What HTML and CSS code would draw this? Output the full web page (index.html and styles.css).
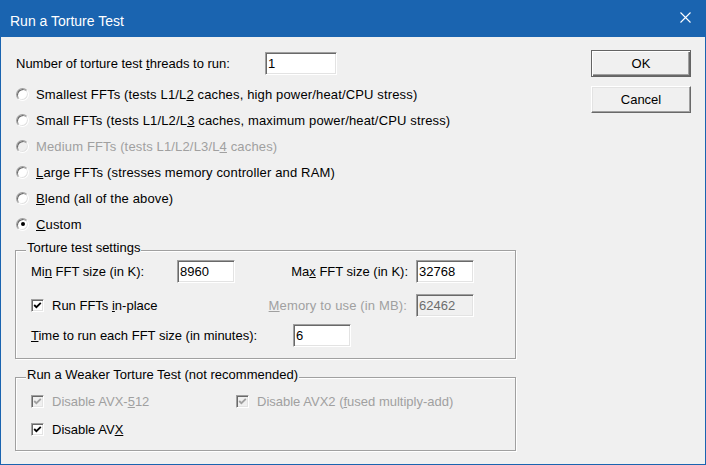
FILE: index.html
```html
<!DOCTYPE html>
<html lang="en">
<head>
    <meta charset="UTF-8">
    <title>Run a Torture Test</title>
    <link rel="stylesheet" href="styles.css">
</head>
<body>
    <div class="window">
        <div class="titlebar">
            <span class="title">Run a Torture Test</span>
            <span class="close">
                <svg width="11" height="11" viewBox="0 0 11 11"><path d="M0.5 0.5 L10.5 10.5 M10.5 0.5 L0.5 10.5" stroke="#fff" stroke-width="1.1" fill="none"/></svg>
            </span>
        </div>
        <div class="client">
            <div class="main">
                <div class="threads">
                    <label class="threads-label">Number of torture test <u>t</u>hreads to run:</label>
                    <input class="edit edit-threads" type="text" value="1">
                </div>

                <div class="choices">
                    <div class="opt"><span class="radio"></span><span>Smallest FFTs (tests L1/L<u>2</u> caches, high power/heat/CPU stress)</span></div>
                    <div class="opt"><span class="radio"></span><span>Small FFTs (tests L1/L2/L<u>3</u> caches, maximum power/heat/CPU stress)</span></div>
                    <div class="opt disabled"><span class="radio"></span><span>Medium FFTs (tests L1/L2/L3/L<u>4</u> caches)</span></div>
                    <div class="opt"><span class="radio"></span><span><u>L</u>arge FFTs (stresses memory controller and RAM)</span></div>
                    <div class="opt"><span class="radio"></span><span><u>B</u>lend (all of the above)</span></div>
                    <div class="opt"><span class="radio on"></span><span><u>C</u>ustom</span></div>
                </div>

                <fieldset class="group settings">
                    <legend>Torture test settings</legend>
                    <div class="frow">
                        <span class="cell-min">Mi<u>n</u> FFT size (in K):</span>
                        <input class="edit edit-size" type="text" value="8960">
                        <span class="cell-max">Ma<u>x</u> FFT size (in K):</span>
                        <input class="edit edit-size" type="text" value="32768">
                    </div>
                    <div class="frow r2">
                        <span class="cb cell-check"><span class="check"><svg viewBox="0 0 9 9"><path d="M1.2 4 L3.4 6.2 L7.8 1.8" /></svg></span><span>Run FFTs <u>i</u>n-place</span></span>
                        <span class="cell-mem dim"><u>M</u>emory to use (in MB):</span>
                        <input class="edit edit-mem" type="text" value="62462" disabled>
                    </div>
                    <div class="frow r3">
                        <span class="cell-time"><u>T</u>ime to run each FFT size (in minutes):</span>
                        <input class="edit edit-size" type="text" value="6">
                    </div>
                </fieldset>

                <fieldset class="group weaker">
                    <legend>Run a Weaker Torture Test (not recommended)</legend>
                    <div class="wrow w1">
                        <span class="cb cell-512 dim"><span class="check off"><svg viewBox="0 0 9 9"><path d="M1.2 4 L3.4 6.2 L7.8 1.8" /></svg></span><span>Disable AVX-<u>5</u>12</span></span>
                        <span class="cb dim"><span class="check off"><svg viewBox="0 0 9 9"><path d="M1.2 4 L3.4 6.2 L7.8 1.8" /></svg></span><span>Disable AVX2 (<u>f</u>used multiply-add)</span></span>
                    </div>
                    <div class="wrow r4">
                        <span class="cb"><span class="check"><svg viewBox="0 0 9 9"><path d="M1.2 4 L3.4 6.2 L7.8 1.8" /></svg></span><span>Disable AV<u>X</u></span></span>
                    </div>
                </fieldset>
            </div>

            <div class="side">
                <button class="btn default">OK</button>
                <button class="btn">Cancel</button>
            </div>
        </div>
    </div>
</body>
</html>
```

FILE: styles.css
```css
body {
    margin: 0;
    font-family: "Liberation Sans", Arial, sans-serif;
    font-size: 13px;
    color: #000;
}

.window {
    width: 706px;
    height: 465px;
    box-sizing: border-box;
    border: 1px solid #1a64b0;
    border-top: none;
    background: #f0f0f0;
    display: flex;
    flex-direction: column;
}

.titlebar {
    height: 37px;
    box-sizing: border-box;
    margin: 0 -1px;
    padding: 4px 0 0 10px;
    background: #1a64b0;
    color: #fff;
    font-size: 14px;
    display: flex;
    align-items: center;
    justify-content: space-between;
}

.close {
    display: flex;
    margin-right: 15px;
    margin-top: -6px;
}

.client {
    flex: 1;
    display: flex;
}

.main {
    padding: 15px 0 0 15px;
    display: flex;
    flex-direction: column;
}

.side {
    margin-left: auto;
    padding: 13px 14px 0 0;
    display: flex;
    flex-direction: column;
    gap: 9px;
}

/* push buttons */
.btn {
    width: 100px;
    height: 27px;
    padding: 0;
    font: inherit;
    color: #000;
    background: #f0f0f0;
    border: 1px solid;
    border-color: #fff #696969 #696969 #fff;
    box-shadow: inset -1px -1px 0 #a0a0a0, inset 1px 1px 0 #e3e3e3;
}

.btn.default {
    border-color: #646464;
    box-shadow: inset 1px 1px 0 #fff, inset -1px -1px 0 #696969, inset -2px -2px 0 #a0a0a0;
}

/* edit boxes */
.edit {
    box-sizing: border-box;
    height: 23px;
    margin: 0;
    padding: 0 0 0 2px;
    font: inherit;
    color: #000;
    background: #fff;
    border: 1px solid;
    border-color: #a0a0a0 #fff #fff #a0a0a0;
    box-shadow: inset 1px 1px 0 #696969, inset -1px -1px 0 #e3e3e3;
    outline: none;
}

.edit:disabled {
    background: #f0f0f0;
    color: #6d6d6d;
}

.edit-threads { width: 72px; }
.edit-size { width: 58px; }
.edit-mem { width: 58px; }

.threads {
    display: flex;
    align-items: center;
    height: 23px;
}

.threads-label {
    width: 249px;
}

/* radio list */
.choices {
    margin-top: 6px;
    display: flex;
    flex-direction: column;
}

.opt {
    height: 26px;
    display: flex;
    align-items: center;
    letter-spacing: 0.15px;
}

.opt.disabled {
    color: #a0a0a0;
}

.radio {
    width: 13px;
    height: 13px;
    box-sizing: border-box;
    margin-right: 7px;
    flex: none;
    border-radius: 50%;
    border: 1px solid;
    border-color: #a0a0a0 #fff #fff #a0a0a0;
    box-shadow: inset 1px 1px 0 #696969, inset -1px -1px 0 #e3e3e3;
    background: #fff;
    display: flex;
    align-items: center;
    justify-content: center;
}

.opt.disabled .radio {
    background: #f0f0f0;
}

.radio.on::after {
    content: "";
    width: 4px;
    height: 4px;
    border-radius: 50%;
    background: #000;
}

/* group boxes */
.group {
    margin: 4px 0 0 -1px;
    width: 501px;
    min-inline-size: 0;
    box-sizing: border-box;
    padding: 0 0 11px 15px;
    border: 1px solid #a0a0a0;
    box-shadow: inset 1px 1px 0 #fff, 1px 1px 0 #fff;
}

.group legend {
    line-height: 14px;
    padding: 0 1px 5px;
    margin-left: -5px;
    background: #f0f0f0;
}

.weaker {
    margin-top: 9px;
    padding-bottom: 9px;
}

.frow, .wrow {
    display: flex;
    align-items: center;
    height: 23px;
}

.cb {
    display: flex;
    align-items: center;
}

.r2 { margin-top: 11px; }
.r3 { margin-top: 7px; }
.w1 { margin-top: 3px; }
.r4 { margin-top: 5px; }

.cell-min { width: 146px; }

.cell-max {
    width: 181px;
    box-sizing: border-box;
    padding-right: 8px;
    text-align: right;
}

.cell-check { width: 203px; }

.cell-mem {
    width: 182px;
    box-sizing: border-box;
    padding-right: 9px;
    text-align: right;
    letter-spacing: 0.15px;
}

.cell-time { width: 262px; }
.cell-512 { width: 205px; }

.dim {
    color: #a0a0a0;
}

/* check boxes */
.check {
    width: 13px;
    height: 13px;
    box-sizing: border-box;
    margin-right: 8px;
    flex: none;
    display: flex;
    align-items: center;
    justify-content: center;
    border: 1px solid;
    border-color: #a0a0a0 #fff #fff #a0a0a0;
    box-shadow: inset 1px 1px 0 #696969, inset -1px -1px 0 #e3e3e3;
    background: #fff;
    color: #000;
}

.check.off {
    background: #f0f0f0;
    color: #a0a0a0;
}

.check svg {
    width: 9px;
    height: 9px;
    fill: none;
    stroke: currentColor;
    stroke-width: 1.8;
}
```
